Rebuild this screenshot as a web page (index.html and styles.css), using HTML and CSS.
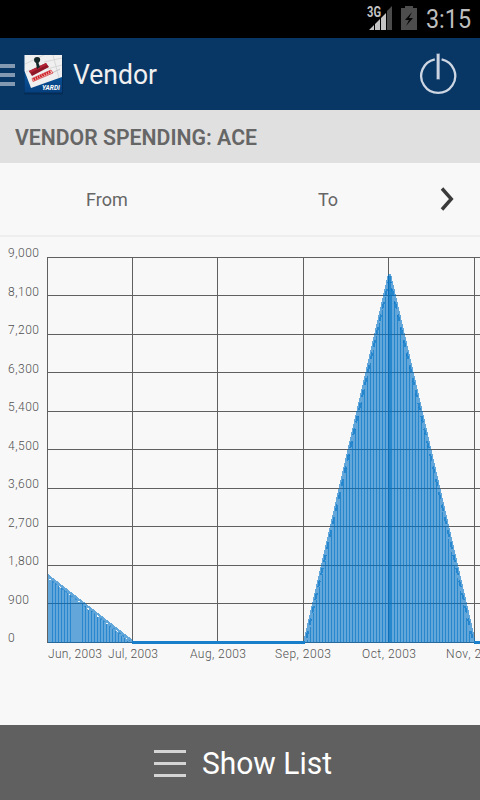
FILE: index.html
```html
<!DOCTYPE html>
<html lang="en">
<head>
<meta charset="utf-8">
<title>Vendor</title>
<link rel="stylesheet" href="styles.css">
</head>
<body>
<div class="status">
  <svg class="signal" width="28" height="26" viewBox="0 0 28 26">
    <path d="M23 1V25H18V6z" fill="#4b4b4b"/>
    <path d="M0 25L5 20V25zM6 25V19L11 14V25zM12 25V13L17 8V25z" fill="#c4c4c4"/>
    <text class="net" x="-2" y="12" textLength="14" lengthAdjust="spacingAndGlyphs">3G</text>
  </svg>
  <svg class="battery" width="16" height="24" viewBox="0 0 16 24">
    <path d="M4 0H12V2H16V24H0V2H4z" fill="#4d4d4d"/>
    <path d="M11 6L4 14H8L5 20L12 12H8z" fill="#050505"/>
  </svg>
  <svg class="clock" width="46" height="30"><text class="time" x="0" y="23" textLength="45" lengthAdjust="spacingAndGlyphs">3:15</text></svg>
</div>
<header class="bar">
  <div class="drawer"><i></i><i></i><i></i></div>
  <svg class="logo" width="40" height="40" viewBox="0 0 40 40">
    <defs>
      <linearGradient id="base" x1="0" y1="0" x2="0" y2="1"><stop offset="0.5" stop-color="#08549b"/><stop offset="1" stop-color="#063f7d"/></linearGradient>
    </defs>
    <rect x="0" y="2" width="39" height="37.5" rx="1" fill="#052c55"/>
    <rect x="0.5" y="0" width="37.5" height="37.5" fill="url(#base)"/>
    <path d="M0.5 0H38V22L7 33L0.5 16z" fill="#efefef"/>
    <path d="M1 9L20 0M20 7L38 3M23 14L38 10M29 0L35 23M2 17L6 15" stroke="#d0d0d0" stroke-width="0.8" fill="none"/>
    <path d="M28 18L36 14" stroke="#bbb" stroke-width="0.8"/>
    <path d="M8 23.5L27 15L29 18L9 26.5z" fill="#f4d6d6" stroke="#d22c31" stroke-width="0.7"/>
    <path d="M9.5 24.5L27 16.5" stroke="#cf2429" stroke-width="2.6" stroke-dasharray="1.8 0.6"/>
    <path d="M5 16L22 8L25 12L8 21z" fill="#8f1626"/>
    <path d="M5 16L22 8L23 10L6 18z" fill="#b32536"/>
    <path d="M10 5Q10 2 13 2Q17 2 16 6L14.5 8L16 12L13 14L12 8Q10 7 10 5z" fill="#16292a"/>
    <text class="brand" x="18" y="35" textLength="18" lengthAdjust="spacingAndGlyphs">YARDI</text>
  </svg>
  <svg class="name" width="90" height="40"><text class="name-text" x="0" y="29" textLength="84" lengthAdjust="spacingAndGlyphs">Vendor</text></svg>
  <svg class="power" width="38" height="44" viewBox="0 0 38 44">
    <path d="M15.8 6.7A17 17 0 1 0 22.6 6.7" transform="translate(0 -.4)" fill="none" stroke="#cdd6e2" stroke-width="2.3"/>
    <path d="M19.2 0.5V26.5" stroke="#8297b3" stroke-width="3.6"/>
    <path d="M19 1V26" stroke="#d3dbe5" stroke-width="1.8"/>
  </svg>
</header>
<section class="heading">
  <svg width="260" height="53"><text class="heading-text" x="15" y="35" textLength="242" lengthAdjust="spacingAndGlyphs">VENDOR SPENDING: ACE</text></svg>
</section>
<section class="range">
  <span class="from">From</span>
  <span class="to">To</span>
  <svg class="next" width="14" height="26" viewBox="0 0 14 26"><path d="M2 2.5L11.3 13L2 23.5" fill="none" stroke="#3b3b3b" stroke-width="3.4"/></svg>
</section>
<main class="chart">
  <svg width="480" height="488" viewBox="0 237 480 488">
    <defs>
      <pattern id="bars" width="3" height="3" patternUnits="userSpaceOnUse" x="1"><rect width="1" height="3" fill="#0072c6"/></pattern>
    </defs>
    <g class="grid">
      <path d="M47 257.5H480M47 295.5H480M47 334.5H480M47 372.5H480M47 411.5H480M47 449.5H480M47 488.5H480M47 526.5H480M47 565.5H480M47 603.5H480M47 642.5H480"/>
      <path d="M47.5 257V643M132.5 257V643M217.5 257V643M303.5 257V643M388.5 257V643M474.5 257V643"/>
    </g>
    <g class="area">
      <path d="M48 574L134 641V643H48z"/>
      <path d="M303 643L388 274H391L476 643z"/>
    </g>
    <g class="stripes">
      <path d="M51 580L73 597V642H51zM80 602L129 642H80z" fill="url(#bars)"/>
      <path d="M307 642L388 286H391L472 642z" fill="url(#bars)"/>
      <path d="M388 276H391V642H388z" fill="#0072c6"/>
    </g>
    <g class="edge">
      <path d="M49.5 579L130 641" stroke="#0072c6" stroke-opacity=".4" stroke-dasharray="2 2"/>
      <path d="M49.5 579L130 641" stroke="#eef6fc" stroke-dasharray="2 10"/>
      <path d="M306.5 638L388.5 282M472.5 638L390.5 282" stroke="#0072c6" stroke-opacity=".6" stroke-width="2" stroke-dasharray="7 6"/>
    </g>
    <path class="baseline" d="M132 642.5H305M474 642.5H480"/>
    <g class="labels">
      <text x="8" y="257" textLength="31">9,000</text>
      <text x="8" y="296" textLength="31">8,100</text>
      <text x="8" y="334" textLength="31">7,200</text>
      <text x="8" y="373" textLength="31">6,300</text>
      <text x="8" y="411" textLength="31">5,400</text>
      <text x="8" y="450" textLength="31">4,500</text>
      <text x="8" y="488" textLength="31">3,600</text>
      <text x="8" y="527" textLength="31">2,700</text>
      <text x="8" y="565" textLength="31">1,800</text>
      <text x="8" y="604" textLength="21">900</text>
      <text x="8" y="642" textLength="7">0</text>
      <text x="48" y="658" textLength="54">Jun, 2003</text>
      <text x="108" y="658" textLength="50">Jul, 2003</text>
      <text x="190" y="658" textLength="56">Aug, 2003</text>
      <text x="275" y="658" textLength="56">Sep, 2003</text>
      <text x="362" y="658" textLength="54">Oct, 2003</text>
      <text x="446" y="658" textLength="57">Nov, 2003</text>
    </g>
  </svg>
</main>
<footer class="show">
  <div class="lines"><i></i><i></i><i></i></div>
  <svg width="134" height="44"><text class="show-text" x="0" y="33" textLength="130" lengthAdjust="spacingAndGlyphs">Show List</text></svg>
</footer>
</body>
</html>
```
FILE: styles.css
```css
* { box-sizing: border-box; }
body {
  margin: 0;
  width: 480px;
  height: 800px;
  overflow: hidden;
  display: flex;
  flex-direction: column;
  background: #f8f8f8;
  font-family: Roboto, sans-serif;
}
svg { display: block; flex: none; }
.status {
  height: 38px;
  background: #000;
  display: flex;
  justify-content: flex-end;
  padding: 5px 8px 0 0;
}
.signal { margin-right: 4px; overflow: visible; }
.battery { margin: 1px 9px 0 0; }
.net { font-size: 14px; font-weight: 700; fill: #c4c4c4; stroke: #000; stroke-width: 2px; paint-order: stroke; }
.time { font-size: 25px; fill: #bebebe; }
.bar {
  height: 72px;
  background: #093765;
  display: flex;
  align-items: flex-start;
}
.drawer {
  width: 15px;
  margin: 26px 9px 0 0;
  display: flex;
  flex-direction: column;
  gap: 5px;
}
.drawer i { height: 4px; background: #8399b1; }
.logo { margin-top: 17px; }
.brand { font-size: 6.5px; font-weight: 700; font-style: italic; fill: #fff; }
.name { margin: 17px 0 0 9px; }
.name-text { font-size: 27px; fill: #f0f0f0; }
.power { margin: 15px 23px 0 auto; }
.heading { height: 53px; background: #e0e0e0; }
.heading-text { font-size: 21.5px; font-weight: 600; fill: #666; }
.range {
  height: 74px;
  border-bottom: 2px solid #eee;
  display: flex;
  align-items: center;
  color: #666;
  font-size: 18px;
}
.from { width: 232px; padding-left: 86px; }
.to { padding-left: 86px; }
.next { margin: 0 26px 0 auto; }
.chart { height: 488px; }
.grid path { stroke: #606060; fill: none; shape-rendering: crispEdges; }
.area { fill: #0072c6; opacity: .6; shape-rendering: crispEdges; }
.stripes { opacity: .6; shape-rendering: crispEdges; }
.edge path { fill: none; shape-rendering: crispEdges; }
.baseline { stroke: #1a7fcb; stroke-width: 3px; fill: none; shape-rendering: crispEdges; }
.labels { font-size: 12px; font-weight: 300; fill: #505050; }
.show {
  height: 75px;
  background: #606060;
  display: flex;
  align-items: center;
  padding-left: 154px;
}
.lines {
  width: 32px;
  margin-right: 16px;
  padding-top: 1px;
  display: flex;
  flex-direction: column;
  gap: 9px;
}
.lines i { height: 3px; background: #d4d4d4; }
.show-text { font-size: 30.5px; fill: #fff; }
```
